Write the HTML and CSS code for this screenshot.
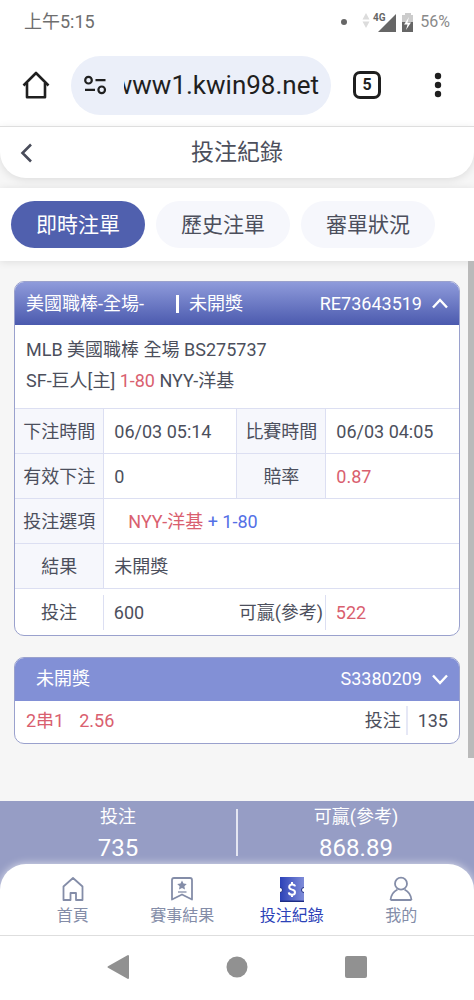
FILE: index.html
```html
<!DOCTYPE html>
<html lang="zh-Hant">
<head>
    <meta charset="UTF-8">
    <meta name="viewport" content="width=device-width, initial-scale=1.0">
    <title>投注紀錄</title>
    <link rel="stylesheet" href="styles.css">
</head>
<body>
    <!-- Phone status bar -->
    <div class="status-bar">
        <span class="clock">上午5:15</span>
        <svg class="status-icons" width="76" height="22" viewBox="0 0 76 22">
            <circle cx="4" cy="11" r="3" fill="#666"/>
            <path d="M26 2l3.5 6.500h-7zM26 17l3.500-6.500h-7z" fill="#dcdcdc"/>
            <text x="33" y="10" class="signal-text">4G</text>
            <path d="M56 3v18H38z" fill="#666"/>
            <path d="M65 2h6v2h2v8H62V4h3z" fill="#ccc"/>
            <path d="M62 11h11v10H62z" fill="#666"/>
            <path d="M69 6l-5 7.500h3.500L66 19l5-7.500h-3.500z" fill="#fff"/>
        </svg>
        <span class="battery">56%</span>
    </div>

    <!-- Browser bar -->
    <div class="browser-bar">
        <button class="icon-button" aria-label="首頁">
            <svg width="28" height="28" viewBox="0 0 28 28" fill="none" stroke="#1f1f1f" stroke-width="2.600" stroke-linejoin="round">
                <path d="M1.500 14.500L14 2l12.500 12.500"/>
                <path d="M5 12v14.200h18V12"/>
            </svg>
        </button>
        <div class="address">
            <svg width="24" height="20" viewBox="0 0 24 20" fill="none" stroke="#1f1f1f" stroke-width="2.200">
                <circle cx="5.500" cy="5.200" r="3.300"/>
                <path d="M12.500 5.200h10M2 14.800h10"/>
                <circle cx="18.700" cy="14.800" r="3.300"/>
            </svg>
            <input type="text" class="url" aria-label="網址" value="www1.kwin98.net">
        </div>
        <button class="icon-button tab-count"><span>5</span></button>
        <button class="icon-button menu-button" aria-label="選單">
            <svg width="8" height="26" viewBox="0 0 8 26" fill="#1f1f1f">
                <circle cx="4" cy="4" r="3.200"/>
                <circle cx="4" cy="13" r="3.200"/>
                <circle cx="4" cy="22" r="3.200"/>
            </svg>
        </button>
    </div>

    <header class="page-header">
        <button class="back-button" aria-label="返回">
            <svg width="12" height="20" viewBox="0 0 12 20" fill="none" stroke="#494c5a" stroke-width="2.600">
                <path d="M11 1.500L2.500 10l8.500 8.500"/>
            </svg>
        </button>
        <h1>投注紀錄</h1>
    </header>

    <div class="tabs">
        <button class="tab active">即時注單</button>
        <button class="tab">歷史注單</button>
        <button class="tab">審單狀況</button>
    </div>

    <main class="bets">
        <section class="bet-card">
            <div class="bet-header open">
                <span class="league">美國職棒-全場-</span>
                <span class="state">未開獎</span>
                <span class="bet-id">RE73643519</span>
                <button class="toggle" aria-label="收合">
                    <svg width="16" height="11" viewBox="0 0 16 11" fill="none" stroke="#fff" stroke-width="2.400">
                        <path d="M1 9.500l7-7.500 7 7.500"/>
                    </svg>
                </button>
            </div>
            <div class="bet-info">
                <p>MLB 美國職棒 全場 BS275737</p>
                <p>SF-巨人[主] <span class="red">1-80</span> NYY-洋基</p>
            </div>
            <table class="bet-table">
                <tr>
                    <th>下注時間</th>
                    <td>06/03 05:14</td>
                    <th>比賽時間</th>
                    <td>06/03 04:05</td>
                </tr>
                <tr>
                    <th>有效下注</th>
                    <td>0</td>
                    <th>賠率</th>
                    <td class="red">0.87</td>
                </tr>
                <tr>
                    <th>投注選項</th>
                    <td class="option" colspan="3"><span class="red">NYY-洋基</span> <span class="blue">+ 1-80</span></td>
                </tr>
                <tr>
                    <th>結果</th>
                    <td colspan="3">未開獎</td>
                </tr>
                <tr class="total-row">
                    <th><span>投注</span></th>
                    <td>600</td>
                    <th><span>可贏(參考)</span></th>
                    <td class="red">522</td>
                </tr>
            </table>
        </section>

        <section class="bet-card">
            <div class="bet-header">
                <span class="parlay-state">未開獎</span>
                <span class="bet-id">S3380209</span>
                <button class="toggle" aria-label="展開">
                    <svg width="16" height="11" viewBox="0 0 16 11" fill="none" stroke="#fff" stroke-width="2.400">
                        <path d="M1 1.500L8 9l7-7.500"/>
                    </svg>
                </button>
            </div>
            <div class="parlay">
                <span class="red">2串1</span>
                <span class="red">2.56</span>
                <span class="stake-label">投注</span>
                <span class="stake">135</span>
            </div>
        </section>
        <div class="scroll-thumb"></div>
    </main>

    <div class="summary">
        <div class="summary-item">
            <span>投注</span>
            <strong>735</strong>
        </div>
        <div class="summary-divider"></div>
        <div class="summary-item">
            <span>可贏(參考)</span>
            <strong>868.89</strong>
        </div>
    </div>

    <nav class="bottom-nav">
        <a href="#">
            <svg width="26" height="26" viewBox="0 0 26 26" fill="none" stroke="#848da8" stroke-width="1.800" stroke-linejoin="round">
                <path d="M3.500 10.500L13 2l9.500 8.500V24H16v-7h-5.500v7h-7z"/>
            </svg>
            首頁
        </a>
        <a href="#">
            <svg width="26" height="26" viewBox="0 0 26 26" fill="none" stroke="#848da8" stroke-width="1.800" stroke-linejoin="round">
                <path d="M3 4q0-2 2-2h16q2 0 2 2v19.500l-10-5-10 5z"/>
                <path d="M9 16h8.500" stroke-width="1.300"/>
                <path d="M13 4.500l1.500 3 3.300.4-2.400 2.300.6 3.300-3-1.600-3 1.600.6-3.300-2.400-2.300 3.300-.4z" fill="#848da8" stroke="none"/>
            </svg>
            賽事結果
        </a>
        <a href="#" class="current">
            <svg width="26" height="26" viewBox="0 0 26 26">
                <defs>
                    <linearGradient id="ticket">
                        <stop offset="0" stop-color="#2c42b8"/>
                        <stop offset="1" stop-color="#7f8cd8"/>
                    </linearGradient>
                </defs>
                <path d="M1 1h24v10.500a2.500 2.500 0 0 0 0 5V26H1v-9.500a2.500 2.500 0 0 0 0-5z" fill="url(#ticket)"/>
                <path d="M1 25.300h24" stroke="#1d2c83" stroke-width="1.400"/>
                <path d="M1 11.500a2.500 2.500 0 0 1 0 5M25 11.500a2.500 2.500 0 0 0 0 5" fill="none" stroke="#1d2c83"/>
                <path d="M16 10.300Q15.700 8.500 13 8.500t-2.800 2.600q0 1.800 2.900 2.500t2.900 2.600q0 2.500-3 2.500t-3.200-2.300M13 6v2.500M13 18.500V21" fill="none" stroke="#fff" stroke-width="2"/>
            </svg>
            投注紀錄
        </a>
        <a href="#">
            <svg width="26" height="26" viewBox="0 0 26 26" fill="none" stroke="#848da8" stroke-width="1.800" stroke-linejoin="round">
                <circle cx="13" cy="7.700" r="6"/>
                <path d="M2.500 24q.8-7.500 7-10.500M23.500 24q-.8-7.500-7-10.500M2.500 24h21"/>
            </svg>
            我的
        </a>
    </nav>

    <!-- Phone navigation keys -->
    <div class="system-keys">
        <button aria-label="返回">
            <svg width="24" height="26" viewBox="0 0 24 26" fill="#919191" stroke="#919191" stroke-width="2" stroke-linejoin="round">
                <path d="M2.500 13L22 2v22z"/>
            </svg>
        </button>
        <button aria-label="主畫面">
            <svg width="24" height="26" viewBox="0 0 24 26" fill="#919191">
                <circle cx="12" cy="13" r="10.500"/>
            </svg>
        </button>
        <button aria-label="最近使用">
            <svg width="24" height="26" viewBox="0 0 24 26" fill="#919191">
                <rect x="1" y="2" width="22" height="22" rx="2"/>
            </svg>
        </button>
    </div>
</body>
</html>
```
FILE: styles.css
```css
* {
    box-sizing: border-box;
}

body {
    font-family: Roboto, "Noto Sans CJK TC", sans-serif;
    font-size: 18px;
    line-height: 26px;
    color: #4c4f5c;
    background-color: #f6f6f6;
    display: flex;
    flex-direction: column;
    min-height: 100vh;
    margin: 0;
}

button {
    font: inherit;
    color: inherit;
    background: none;
    border: none;
    padding: 0;
    cursor: pointer;
}

svg {
    display: block;
}

.red {
    color: #d9606f;
}

.blue {
    color: #5470e6;
}

/* status bar */
.status-bar {
    display: flex;
    align-items: center;
    height: 44px;
    padding: 0 24px;
    background-color: #fff;
    color: #6e6e6e;
}

.status-icons {
    margin-left: auto;
}

.signal-text {
    font-size: 10px;
    font-weight: 700;
    fill: #666;
}

.battery {
    font-size: 16px;
    color: #8a8a8a;
    margin-left: 4px;
}

/* browser bar */
.browser-bar {
    display: flex;
    align-items: center;
    height: 82px;
    padding: 0 32px 0 22px;
    background-color: #fff;
}

.address {
    flex: 1;
    min-width: 0;
    display: flex;
    align-items: center;
    gap: 17px;
    height: 59px;
    margin-left: 21px;
    padding: 0 12px;
    border-radius: 30px;
    background-color: #ebeff9;
}

.url {
    flex: 1;
    min-width: 0;
    height: 40px;
    padding: 0;
    border: none;
    outline: none;
    background: none;
    font-family: inherit;
    font-size: 26px;
    color: #1f1f1f;
    direction: rtl;
}

.tab-count {
    width: 28px;
    height: 28px;
    margin-left: 22px;
    border: 3px solid #1f1f1f;
    border-radius: 7px;
    font-size: 16px;
    font-weight: 700;
    line-height: 22px;
    color: #1f1f1f;
}

.menu-button {
    margin-left: 53px;
}

/* page header */
.page-header {
    display: flex;
    align-items: center;
    height: 52px;
    padding: 0 20px;
    background-color: #fff;
    border-top: 1px solid #dedede;
    border-radius: 0 0 26px 26px;
    box-shadow: 0 2px 8px rgba(0, 0, 0, 0.1);
}

.back-button {
    width: 12px;
}

h1 {
    flex: 1;
    margin: 0 12px 0 0;
    font-size: 23px;
    font-weight: 400;
    text-align: center;
}

/* tabs */
.tabs {
    display: flex;
    gap: 11px;
    margin-top: 10px;
    padding: 13px 11px;
    background-color: #fff;
    box-shadow: 0 1px 8px rgba(0, 0, 0, 0.1);
}

.tab {
    flex: 0 1 134px;
    height: 47px;
    border-radius: 24px;
    background-color: #f6f7fc;
    font-size: 21px;
    white-space: nowrap;
}

.tab.active {
    background-color: #5060ae;
    color: #fff;
}

/* bet list */
.bets {
    position: relative;
    flex: 1;
    display: flex;
    flex-direction: column;
    gap: 21px;
    padding: 20px 14px;
}

.scroll-thumb {
    position: absolute;
    top: 0;
    right: 0;
    width: 6px;
    height: 92%;
    background-color: #bababa;
}

.bet-card {
    overflow: hidden;
    background-color: #fff;
    border: 1px solid #9aa1cd;
    border-radius: 10px;
}

.bet-header {
    display: flex;
    align-items: center;
    height: 43px;
    padding: 0 11px;
    background-color: #8290d6;
    color: #fff;
}

.bet-header.open {
    background: linear-gradient(#8f9bdb, #4b5aae);
}

.league {
    width: 36%;
    max-width: 150px;
}

.state {
    padding-left: 10px;
    border-left: 3px solid #fff;
    line-height: 18px;
}

.parlay-state {
    padding-left: 10px;
}

.bet-id {
    margin-left: auto;
}

.toggle {
    margin-left: 10px;
}

.bet-info {
    padding: 9px 11px 12px;
}

.bet-info p {
    margin: 0;
    line-height: 31px;
}

.bet-table {
    width: 100%;
    table-layout: fixed;
    border-collapse: collapse;
}

.bet-table th,
.bet-table td {
    height: 45px;
    padding: 2px 0 0;
    border-top: 1px solid #dcdff2;
    font-weight: 400;
    white-space: nowrap;
}

.bet-table th {
    width: 20%;
    background-color: #f6f7fc;
    border-right: 1px solid #dcdff2;
}

.bet-table td {
    width: 30%;
    padding-left: 10px;
}

.bet-table td + th {
    border-left: 1px solid #dcdff2;
}

.bet-table td.option {
    padding-left: 24px;
}

.bet-table .total-row th {
    background: none;
    border-left: none;
    border-right: none;
}

.bet-table .total-row th,
.bet-table .total-row td {
    height: 46px;
}

.total-row th span {
    display: block;
    line-height: 35px;
    border-right: 1px solid #dcdff2;
}

/* parlay row */
.parlay {
    display: flex;
    align-items: center;
    gap: 15px;
    height: 42px;
    padding: 0 11px 2px;
}

.stake-label {
    margin-left: auto;
}

.stake {
    margin-left: -10px;
    padding-left: 10px;
    border-left: 2px solid #e6e8f6;
    line-height: 29px;
}

/* summary */
.summary {
    display: flex;
    padding-bottom: 26px;
    background-color: #969dc5;
    color: #fff;
}

.summary-item {
    flex: 1;
    display: flex;
    flex-direction: column;
    align-items: center;
    height: 63px;
    padding-top: 3px;
}

.summary-divider {
    width: 2px;
    height: 47px;
    margin-top: 8px;
    background-color: #e4e6f2;
}

.summary strong {
    font-size: 24px;
    font-weight: 400;
    line-height: 36px;
}

/* bottom nav */
.bottom-nav {
    display: flex;
    height: 71px;
    margin-top: -26px;
    padding: 0 18px;
    background-color: #fff;
    border-radius: 26px 26px 0 0;
    box-shadow: 0 0 8px rgba(255, 255, 255, 0.7);
}

.bottom-nav a {
    flex: 1;
    display: flex;
    flex-direction: column;
    align-items: center;
    gap: 1px;
    padding-top: 12px;
    font-size: 16px;
    color: #848da8;
    text-decoration: none;
    white-space: nowrap;
}

.bottom-nav a.current {
    color: #2c42b8;
}

/* system keys */
.system-keys {
    display: flex;
    justify-content: center;
    gap: 20%;
    height: 65px;
    padding-bottom: 2px;
    border-top: 1px solid #dedede;
    background-color: #fff;
}
```
